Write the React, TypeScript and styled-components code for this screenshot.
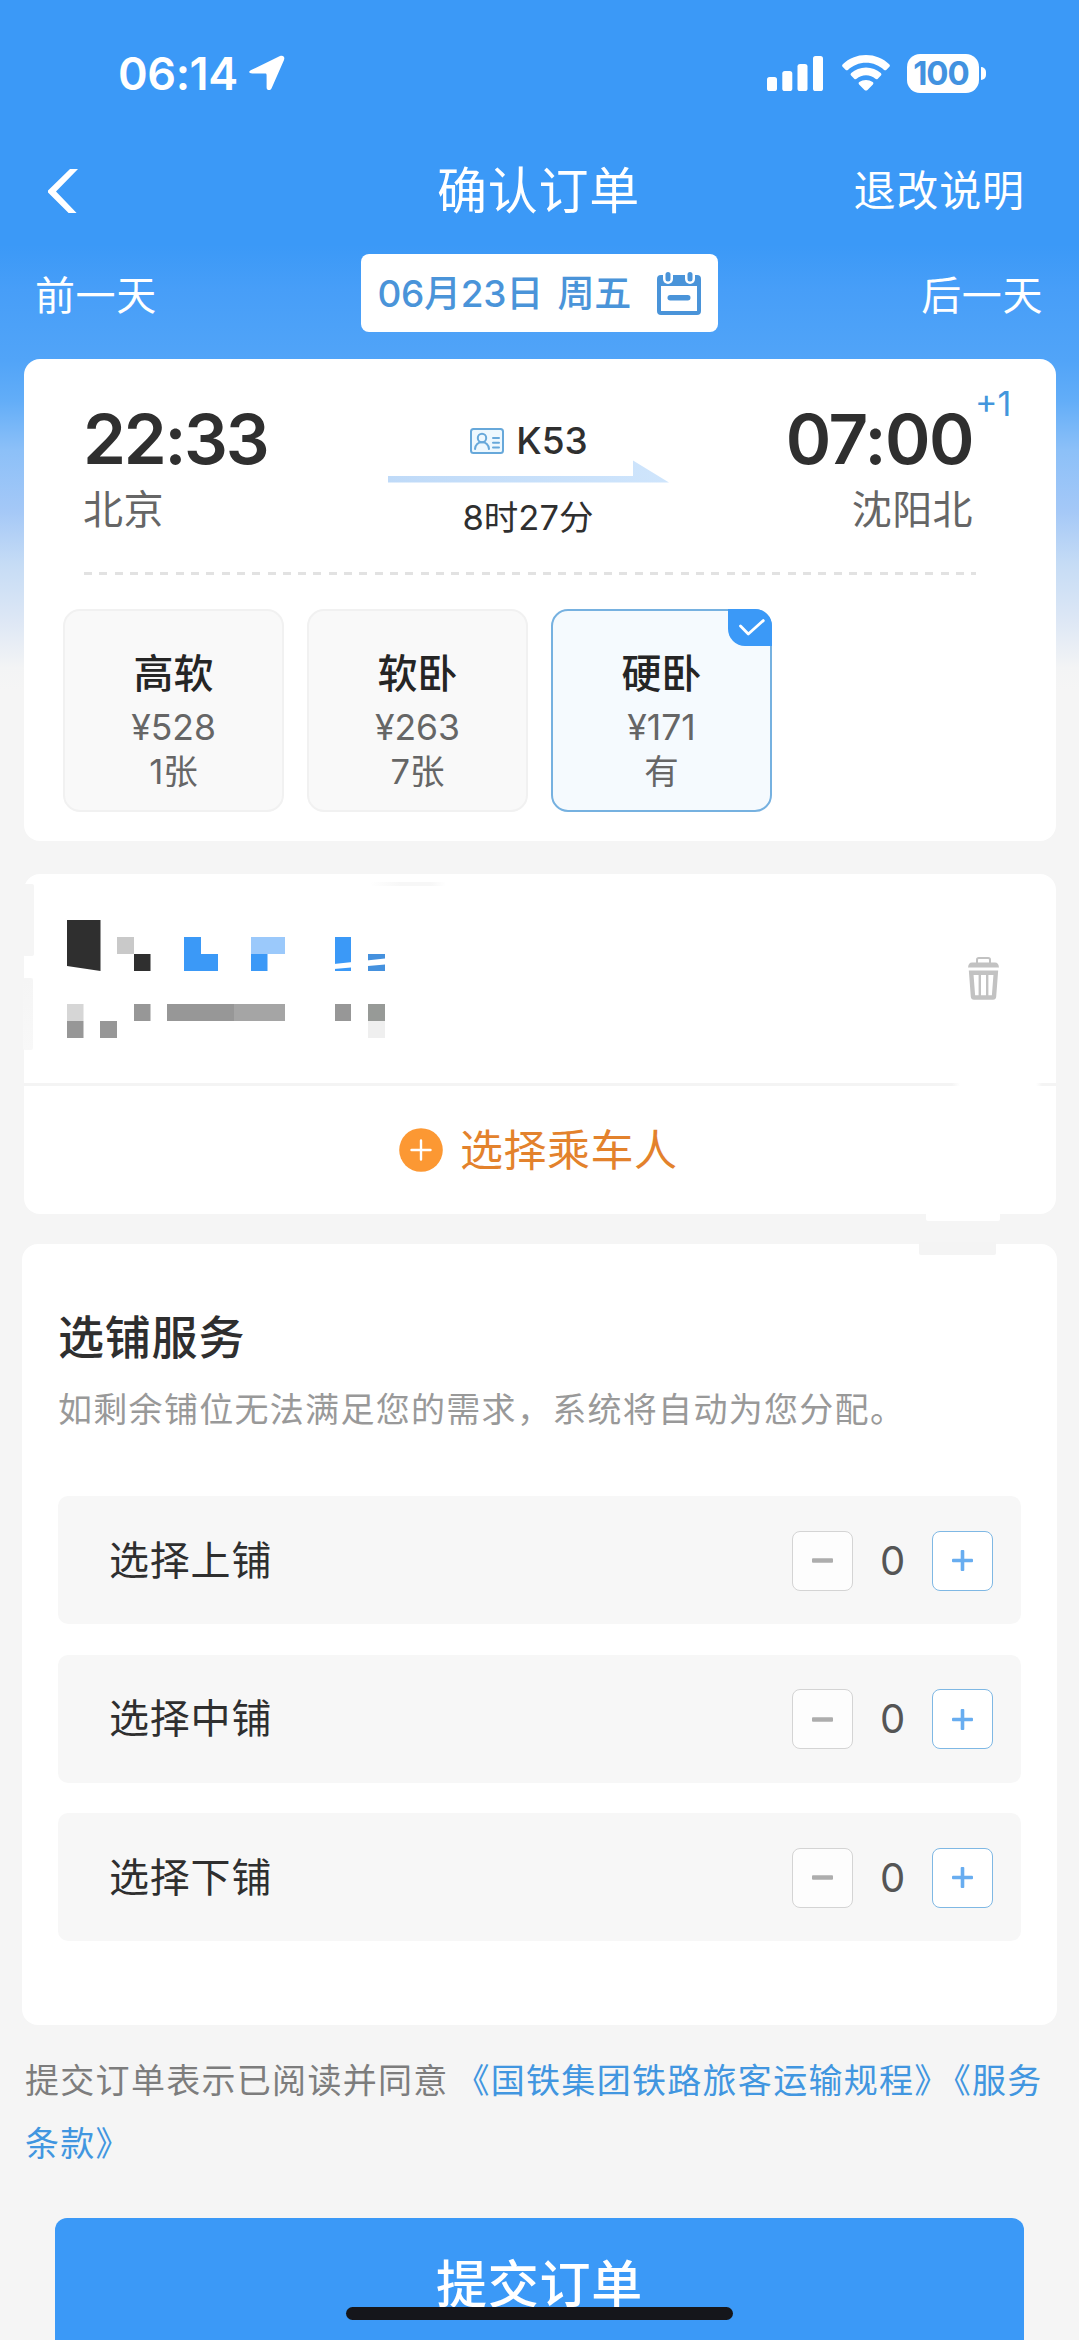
import React from "react";
import styled, { createGlobalStyle } from "styled-components";

const GlobalStyle = createGlobalStyle`
  *, *::before, *::after { box-sizing: border-box; }
  body { margin: 0; background: #f5f5f5; overflow: hidden; }
  button { font: inherit; border: 0; padding: 0; margin: 0; background: none; color: inherit; }
  svg { display: block; flex: none; }
`;

const Page = styled.div`
  width: 1079px;
  height: 2340px;
  overflow: hidden;
  position: relative;
  display: flex;
  flex-direction: column;
  font-family: Inter, "Noto Sans CJK SC", sans-serif;
  color: #2f2f2f;
  background: linear-gradient(
    180deg,
    #3b99f7 0,
    #3b99f7 245px,
    #479ef8 290px,
    #51a4f8 360px,
    #62adf8 400px,
    #8cc0f8 450px,
    #a4c8f7 510px,
    #c6dcf5 565px,
    #dde7f5 620px,
    #f3f4f5 668px,
    #f5f5f5 690px
  );
`;

const Line = styled.span<{
  $size: number;
  $weight?: number;
  $color?: string;
  $spacing?: number;
  $height?: number;
  $word?: number;
}>`
  display: block;
  white-space: nowrap;
  font-size: ${(p) => p.$size}px;
  font-weight: ${(p) => p.$weight ?? 400};
  line-height: ${(p) => p.$height ?? p.$size}px;
  letter-spacing: ${(p) => p.$spacing ?? 0}px;
  word-spacing: ${(p) => p.$word ?? 0}px;
  color: ${(p) => p.$color ?? "inherit"};
`;

/* ---------- header ---------- */

const StatusBar = styled.div`
  flex: none;
  height: 146px;
  padding: 0 93px 0 118px;
  display: flex;
  align-items: center;
  justify-content: space-between;
  color: #fff;
`;

const StatusGroup = styled.div<{ $gap: number }>`
  display: flex;
  align-items: center;
  gap: ${(p) => p.$gap}px;
`;

const Battery = styled.div`
  display: flex;
  align-items: center;
  gap: 2px;
`;

const BatteryBody = styled.div`
  width: 72px;
  height: 39px;
  border-radius: 13px;
  background: #fff;
  display: flex;
  align-items: center;
  justify-content: center;
  padding-right: 4px;
`;

const BatteryTip = styled.div`
  width: 5px;
  height: 13px;
  border-radius: 0 6px 6px 0;
  background: #fff;
`;

const NavBar = styled.header`
  flex: none;
  height: 88px;
  padding: 2px 54px 0 48px;
  display: grid;
  grid-template-columns: 1fr auto 1fr;
  align-items: center;
  color: #fff;
  > :nth-child(2) { padding-left: 4px; }
  > :last-child { justify-self: end; }
`;

const DateBar = styled.nav`
  flex: none;
  height: 78px;
  margin-top: 20px;
  padding: 0 36px 0 35px;
  display: grid;
  grid-template-columns: 1fr auto 1fr;
  align-items: center;
  color: #fff;
  > span { padding-top: 5px; }
  > :last-child { justify-self: end; }
`;

const DatePicker = styled.button`
  width: 357px;
  height: 78px;
  border-radius: 8px;
  background: #fff;
  display: flex;
  align-items: center;
  justify-content: space-between;
  padding: 0 17px;
`;

/* ---------- cards ---------- */

const Card = styled.section<{ $top: number; $height: number; $wide?: boolean }>`
  flex: none;
  position: relative;
  margin: ${(p) => p.$top}px ${(p) => (p.$wide ? 22 : 23)}px 0 ${(p) => (p.$wide ? 22 : 24)}px;
  height: ${(p) => p.$height}px;
  border-radius: 16px;
  background: #fff;
  display: flex;
  flex-direction: column;
`;

const Journey = styled.div`
  height: 214px;
  padding: 0 83px 0 59px;
  display: grid;
  grid-template-columns: 188px 1fr 188px;
`;

const Stop = styled.div<{ $end?: boolean }>`
  position: relative;
  padding-top: 46px;
  display: flex;
  flex-direction: column;
  gap: 16px;
  align-items: ${(p) => (p.$end ? "flex-end" : "flex-start")};
`;

const DayOffset = styled.div`
  position: absolute;
  left: 190px;
  top: 28px;
`;

const Trip = styled.div`
  padding-top: 62px;
  display: flex;
  flex-direction: column;
  align-items: center;
`;

const TrainNo = styled.div`
  display: flex;
  align-items: center;
  gap: 12px;
  height: 39px;
  padding-left: 2px;
`;

const Dashes = styled.div`
  height: 3px;
  margin: -1px 80px 0 60px;
  background: repeating-linear-gradient(90deg, #e2e2e2 0 8px, transparent 8px 15.3px);
`;

const Seats = styled.div`
  display: flex;
  gap: 23px;
  padding: 34px 0 0 39px;
`;

const Seat = styled.button<{ $active?: boolean }>`
  position: relative;
  width: 221px;
  height: 203px;
  border-radius: 17px;
  border: 2px solid ${(p) => (p.$active ? "#76b1e0" : "#f1f1f1")};
  background: ${(p) => (p.$active ? "#f5fafe" : "#f9f9f9")};
  display: flex;
  flex-direction: column;
  align-items: center;
  padding: 41px 0 0 0;
`;

const SeatBadge = styled.span`
  position: absolute;
  top: -2px;
  right: -2px;
  width: 44px;
  height: 37px;
  border-radius: 0 17px 0 17px;
  background: #3b99f7;
  display: flex;
  align-items: center;
  justify-content: center;
  padding-left: 4px;
`;

const Passenger = styled.div`
  height: 209px;
  display: flex;
  align-items: flex-start;
  justify-content: space-between;
  padding: 46px 57px 0 43px;
`;

const TrashButton = styled.button`
  margin-top: 37px;
`;

const Divider = styled.div`
  height: 3px;
  background: linear-gradient(90deg, #f4f4f4 928px, #fff 936px, #fff 1012px, #f4f4f4 1018px);
`;

const AddPassenger = styled.button`
  height: 128px;
  display: flex;
  align-items: center;
  gap: 17px;
  padding-left: 375px;
`;

const Smudge = styled.i<{ $x: number; $y: number; $w: number; $h: number; $tone: string }>`
  position: absolute;
  left: ${(p) => p.$x}px;
  top: ${(p) => p.$y}px;
  width: ${(p) => p.$w}px;
  height: ${(p) => p.$h}px;
  background: ${(p) => p.$tone};
  border-radius: 2px;
`;

const BerthHead = styled.div`
  padding: 70px 0 0 36px;
  height: 252px;
  display: flex;
  flex-direction: column;
  gap: 33px;
`;

const BerthList = styled.div`
  display: flex;
  flex-direction: column;
  gap: 30.5px;
  padding: 0 36px 0 36px;
`;

const BerthRow = styled.div`
  height: 128px;
  border-radius: 10px;
  background: #f7f7f7;
  display: flex;
  align-items: center;
  justify-content: space-between;
  padding: 1px 28px 0 51px;
`;

const Stepper = styled.div`
  display: grid;
  grid-template-columns: 61px 79px 61px;
  align-items: center;
  justify-items: center;
`;

const StepButton = styled.button<{ $plus?: boolean }>`
  width: 61px;
  height: 60px;
  border-radius: 8px;
  border: 1.5px solid ${(p) => (p.$plus ? "#7fb8e4" : "#d4d4d4")};
  background: ${(p) => (p.$plus ? "#fff" : "#fdfdfd")};
  display: flex;
  align-items: center;
  justify-content: center;
`;

/* ---------- footer ---------- */

const Terms = styled.p`
  flex: none;
  margin: 25px 20px 0 25px;
  height: 167.5px;
  font-size: 34px;
  letter-spacing: 1.3px;
  line-height: 62.5px;
  color: #7d7d7d;
`;

const TermsLink = styled.a<{ $shift: number }>`
  margin-left: ${(p) => p.$shift}px;
  color: #4196e0;
`;

const Submit = styled.button`
  flex: none;
  height: 140px;
  margin: 0 55px;
  border-radius: 12px;
  background: #3b99f7;
  display: flex;
  justify-content: center;
  align-items: flex-start;
  padding-top: 41px;
`;

const HomeIndicator = styled.div`
  position: absolute;
  left: 346px;
  top: 2307px;
  width: 387px;
  height: 13px;
  border-radius: 7px;
  background: #15161b;
`;

/* ---------- icons ---------- */

const LocationArrow = () => (
  <svg width="36" height="36" viewBox="0 0 36 36" fill="#fff">
    <path d="M2.200 15 31 1.100c3-1.300 5.200.8 4 3.800L22.600 33.200c-1.200 2.900-5 2.400-5-.8V20.200c0-1.300-.4-1.700-1.700-1.700H3.400C-.4 18.500-.8 16.400 2.200 15Z" />
  </svg>
);

const Signal = () => (
  <svg width="57" height="35" viewBox="0 0 57 35" fill="#fff">
    <rect x="0" y="21" width="10" height="14" rx="2.6" />
    <rect x="15.3" y="15" width="10" height="20" rx="2.6" />
    <rect x="30.5" y="8" width="10" height="27" rx="2.6" />
    <rect x="46" y="0" width="10" height="35" rx="2.6" />
  </svg>
);

const Wifi = () => (
  <svg width="48" height="36" viewBox="0 0 48 36" fill="#fff">
    <path d="M24 0C15 0 6.800 3.400.8 9.200c-.9.800-.9 1.800-.2 2.600l2.900 3c.7.700 1.600.7 2.400.1C10.800 10.400 17 7.700 24 7.700s13.200 2.700 18.100 7.200c.8.600 1.700.6 2.400-.1l2.900-3c.7-.8.700-1.800-.2-2.600C41.200 3.400 33 0 24 0Z" />
    <path d="M24 12.400c-5.700 0-10.800 2.100-14.800 5.600-.8.800-.8 1.800-.1 2.500l3.100 3.200c.7.700 1.600.7 2.400.1 2.500-2.100 5.800-3.500 9.400-3.500s6.900 1.400 9.400 3.500c.8.600 1.700.6 2.400-.1l3.100-3.200c.7-.7.700-1.700-.1-2.500-4-3.500-9.100-5.600-14.800-5.600Z" />
    <path d="M24 25c-2.500 0-4.800.8-6.700 2.100-.9.700-.9 1.600-.2 2.300l5.400 5.500c.9.900 2.100.9 3 0l5.400-5.500c.7-.7.7-1.600-.2-2.300A11.700 11.700 0 0 0 24 25Z" />
  </svg>
);

const Back = () => (
  <svg width="30" height="44" viewBox="0 0 30 44" fill="#fff">
    <path d="M22 0h8L8 22.500 28.600 44h-8L0 23.500v-2Z" />
  </svg>
);

const CalendarIcon = () => (
  <svg width="44" height="43" viewBox="0 0 44 43">
    <rect x="2" y="5" width="40" height="36" rx="2" fill="#fff" stroke="#4a94d9" strokeWidth="4" />
    <rect x="1" y="4" width="42" height="10" fill="#4a94d9" />
    <rect x="6" y="-3" width="10" height="15" rx="5" fill="#fff" />
    <rect x="28" y="-3" width="10" height="15" rx="5" fill="#fff" />
    <rect x="8.500" y="0" width="5" height="9.500" rx="2.500" fill="#4a94d9" />
    <rect x="30.500" y="0" width="5" height="9.500" rx="2.500" fill="#4a94d9" />
    <rect x="10.500" y="23" width="23" height="5.500" rx="2.700" fill="#4a94d9" />
  </svg>
);

const IdCard = () => (
  <svg width="34" height="26" viewBox="0 0 34 26" fill="none" stroke="#67a8da" strokeWidth="2" strokeLinecap="round">
    <rect x="1" y="1" width="32" height="24" rx="2.500" fill="#eef8fe" />
    <circle cx="12" cy="10" r="4.200" />
    <path d="M5 21c.6-4.500 3.400-6.700 7-6.700s6.400 2.200 7 6.700M23 10h6M23 14.800h6M23 19.600h6" />
  </svg>
);

const RouteArrow = () => (
  <svg width="281" height="23" viewBox="0 0 281 23">
    <defs>
      <linearGradient id="route" x1="0" x2="1">
        <stop offset="0" stopColor="#bfdaf8" />
        <stop offset="1" stopColor="#cfe5fc" />
      </linearGradient>
    </defs>
    <path d="M0 16h245V0.500L281 22.500H0Z" fill="url(#route)" />
  </svg>
);

const Check = () => (
  <svg width="26" height="17" viewBox="0 0 26 17" fill="none" stroke="#fff" strokeWidth="2.800" strokeLinecap="round" strokeLinejoin="round">
    <path d="M1.500 7 9.300 15 24.300 1.600" />
  </svg>
);

const Trash = () => (
  <svg width="31" height="43" viewBox="0 0 31 43" fill="none" stroke="#c2c2c2">
    <path d="M9 7V2.800Q9 1 10.800 1h9.400Q22 1 22 2.800V7" strokeWidth="2" />
    <path d="M0 10.500Q.5 5.500 4 5.500H27q3.500 0 4 5Z" fill="#c2c2c2" stroke="none" />
    <path d="M3.200 15.800H27.800L26 39.500q-.1 1-1 1H6q-.9 0-1-1Z" strokeWidth="4.400" />
    <path d="M11.800 16V40M19.200 16V40" strokeWidth="2.400" />
  </svg>
);

const PlusCircle = () => (
  <svg width="44" height="44" viewBox="0 0 44 44">
    <circle cx="22" cy="22" r="21.800" fill="#fc9833" />
    <path d="M12.500 22h19M22 12.500v19" stroke="#fff" strokeWidth="2.400" strokeLinecap="round" />
  </svg>
);

const Minus = () => (
  <svg width="21" height="21" viewBox="0 0 21 21">
    <rect y="8.300" width="21" height="4.400" rx="1" fill="#adadad" />
  </svg>
);

const Plus = () => (
  <svg width="21" height="21" viewBox="0 0 21 21" fill="#68adf0">
    <rect y="8.700" width="21" height="3.600" rx="1" />
    <rect x="8.700" width="3.600" height="21" rx="1" />
  </svg>
);

type Block = [number, number, number, number, string];
const maskBlocks: Block[] = [
  [50, 17, 17, 17, "#c9c9c9"],
  [67, 34, 16.5, 17, "#2f2f2f"],
  [117, 17, 17, 34, "#3b99f7"],
  [134, 34, 17, 17, "#3b99f7"],
  [184, 17, 34, 17, "#9bc9fb"],
  [184, 34, 16.5, 17, "#3b99f7"],
  [268, 17, 16, 34, "#3b99f7"],
  [301, 34, 17, 17, "#4591de"],
  [0, 84, 16.5, 17, "#d6d6d6"],
  [0, 101, 16.5, 17, "#979797"],
  [33, 101, 17, 17, "#979797"],
  [67, 84, 16.5, 17, "#979797"],
  [100, 84, 67, 17, "#979797"],
  [167, 84, 51, 17, "#a5a5a5"],
  [268, 84, 16, 17, "#979797"],
  [301, 84, 17, 17, "#979a97"],
  [301, 101, 17, 17, "#efefef"],
];

const MaskedPassenger = () => (
  <svg width="318" height="118" viewBox="0 0 318 118">
    <path d="M0 0h33.500v51L0 46Z" fill="#2f2f2f" />
    {maskBlocks.map(([x, y, w, h, c], i) => (
      <rect key={i} x={x} y={y} width={w} height={h} fill={c} />
    ))}
    <path d="M267 44 318 38.500V44.500L267 49Z" fill="#fff" />
  </svg>
);

/* ---------- data ---------- */

const seats = [
  { name: "高软", price: "¥528", left: "1张" },
  { name: "软卧", price: "¥263", left: "7张" },
  { name: "硬卧", price: "¥171", left: "有", active: true },
];

const berths = ["选择上铺", "选择中铺", "选择下铺"];

export default function App() {
  return (
    <Page>
      <GlobalStyle />
      <StatusBar>
        <StatusGroup $gap={11}>
          <Line $size={45} $weight={600} $spacing={-0.4}>06:14</Line>
          <LocationArrow />
        </StatusGroup>
        <StatusGroup $gap={17.5}>
          <Signal />
          <Wifi />
          <Battery>
            <BatteryBody>
              <Line $size={33} $weight={700} $color="#4292e0" $spacing={-1}>100</Line>
            </BatteryBody>
            <BatteryTip />
          </Battery>
        </StatusGroup>
      </StatusBar>

      <NavBar>
        <Back />
        <Line $size={50} $spacing={0.8}>确认订单</Line>
        <Line $size={42} $spacing={0.9}>退改说明</Line>
      </NavBar>

      <DateBar>
        <Line $size={40} $spacing={0.6}>前一天</Line>
        <DatePicker>
          <Line $size={37} $weight={500} $color="#4a94d9" $spacing={-0.3} $word={5}>06月23日 周五</Line>
          <CalendarIcon />
        </DatePicker>
        <Line $size={40} $spacing={0.6}>后一天</Line>
      </DateBar>

      <Card $top={27} $height={482}>
        <Journey>
          <Stop>
            <Line $size={69} $weight={600} $spacing={-2.3}>22:33</Line>
            <Line $size={40} $spacing={0.6} $color="#666">北京</Line>
          </Stop>
          <Trip>
            <TrainNo>
              <IdCard />
              <Line $size={37} $weight={500}>K53</Line>
            </TrainNo>
            <RouteArrow />
            <Line $size={34.5} $height={69}>8时27分</Line>
          </Trip>
          <Stop $end>
            <Line $size={69} $weight={600} $spacing={-1.5}>07:00</Line>
            <Line $size={40} $spacing={0.4} $color="#666">沈阳北</Line>
            <DayOffset>
              <Line $size={34} $color="#4396dc">+1</Line>
            </DayOffset>
          </Stop>
        </Journey>
        <Dashes />
        <Seats>
          {seats.map((s) => (
            <Seat key={s.name} $active={s.active}>
              <Line $size={40} $weight={500} $height={44} $color="#252525">{s.name}</Line>
              <Line $size={35.5} $color="#666" $height={64}>{s.price}</Line>
              <Line $size={34.5} $color="#666" $height={23}>{s.left}</Line>
              {s.active && (
                <SeatBadge>
                  <Check />
                </SeatBadge>
              )}
            </Seat>
          ))}
        </Seats>
      </Card>

      <Card $top={33} $height={340}>
        <Passenger>
          <MaskedPassenger />
          <TrashButton aria-label="删除">
            <Trash />
          </TrashButton>
        </Passenger>
        <Divider />
        <AddPassenger>
          <PlusCircle />
          <Line $size={43} $spacing={0.5} $color="#e3822c">选择乘车人</Line>
        </AddPassenger>
        <Smudge $x={-1} $y={10} $w={11} $h={72} $tone="#f5f5f5" />
        <Smudge $x={-1} $y={104} $w={10} $h={72} $tone="linear-gradient(#f5f5f5, #f8f8f8)" />
        <Smudge $x={346} $y={8} $w={76} $h={4} $tone="linear-gradient(90deg, #fff, #f7f7f7 40%, #f7f7f7 80%, #fff)" />
        <Smudge $x={902} $y={338} $w={74} $h={9} $tone="#fff" />
      </Card>

      <Card $top={30} $height={781} $wide>
        <Smudge $x={897} $y={-2} $w={77} $h={13} $tone="#f4f4f4" />
        <BerthHead>
          <Line $size={46} $weight={500} $spacing={0.8}>选铺服务</Line>
          <Line $size={34} $spacing={1.3} $color="#999">如剩余铺位无法满足您的需求，系统将自动为您分配。</Line>
        </BerthHead>
        <BerthList>
          {berths.map((b) => (
            <BerthRow key={b}>
              <Line $size={40} $spacing={0.8}>{b}</Line>
              <Stepper>
                <StepButton aria-label="减少"><Minus /></StepButton>
                <Line $size={40} $color="#555">0</Line>
                <StepButton $plus aria-label="增加"><Plus /></StepButton>
              </Stepper>
            </BerthRow>
          ))}
        </BerthList>
      </Card>

      <Terms>
        提交订单表示已阅读并同意 <TermsLink $shift={-4}>《国铁集团铁路旅客运输规程》</TermsLink>
        <TermsLink $shift={4}>《服务条款》</TermsLink>
      </Terms>

      <Submit>
        <Line $size={51} $weight={500} $spacing={0.8} $color="#fff">提交订单</Line>
      </Submit>
      <HomeIndicator />
    </Page>
  );
}
